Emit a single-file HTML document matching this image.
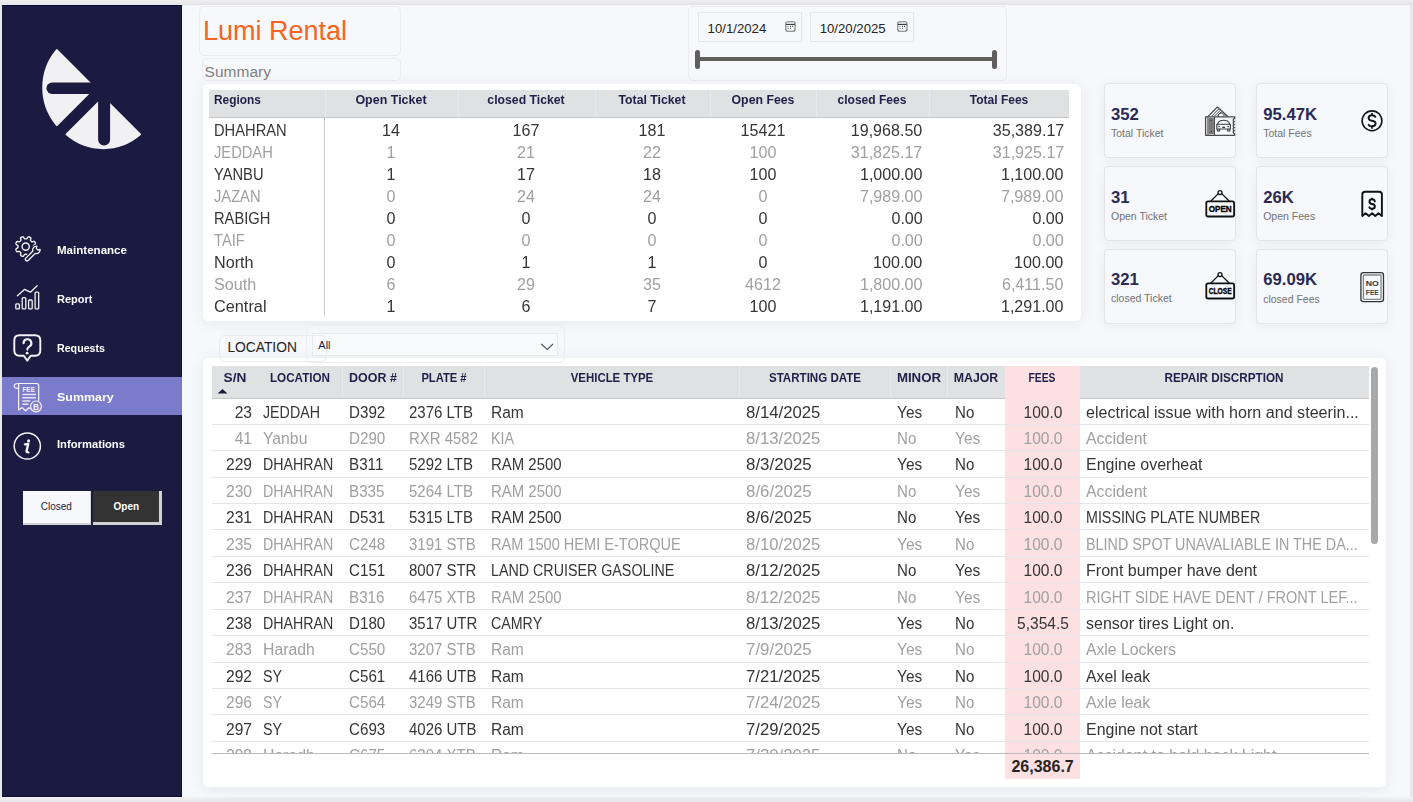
<!DOCTYPE html>
<html><head><meta charset="utf-8"><style>
html,body{margin:0;padding:0;}
body{width:1413px;height:802px;overflow:hidden;position:relative;background:#e9e9eb;font-family:"Liberation Sans", sans-serif;}
.t{position:absolute;line-height:1;white-space:pre;z-index:6;}
.b{position:absolute;}
svg{position:absolute;left:0;top:0;z-index:7;}
</style></head><body>
<div class="b" style="left:0.00px;top:0.00px;width:1413.00px;height:5.00px;background:linear-gradient(#f0f0f2,#e4e4e6)"></div>
<div class="b" style="left:0.00px;top:797.00px;width:1413.00px;height:5.00px;background:linear-gradient(#f3f3f5,#e5e5e7)"></div>
<div class="b" style="left:2.00px;top:5.00px;width:1408.00px;height:792.00px;background:#f7f8fc"></div>
<div class="b" style="left:2.00px;top:5.00px;width:180.00px;height:792.00px;background:#1b1a41;border-top:1px solid #0c0b33;border-bottom:1px solid #0c0b33;box-sizing:border-box"></div>
<div class="b" style="left:181.00px;top:5.00px;width:1.30px;height:792.00px;background:#131238"></div>
<div class="b" style="left:2.00px;top:377.00px;width:179.50px;height:37.50px;background:#7b7bcb"></div>
<div class="t" style="left:57.40px;top:245.25px;font-size:11.4px;color:#ffffff;font-weight:700;transform:scaleX(1.0138);transform-origin:left;">Maintenance</div>
<div class="t" style="left:57.40px;top:294.35px;font-size:11.4px;color:#ffffff;font-weight:700;transform:scaleX(0.9665);transform-origin:left;">Report</div>
<div class="t" style="left:57.40px;top:343.05px;font-size:11.4px;color:#ffffff;font-weight:700;transform:scaleX(0.9354);transform-origin:left;">Requests</div>
<div class="t" style="left:57.40px;top:391.75px;font-size:11.4px;color:#ffffff;font-weight:700;transform:scaleX(1.0913);transform-origin:left;">Summary</div>
<div class="t" style="left:57.40px;top:439.35px;font-size:11.4px;color:#ffffff;font-weight:700;transform:scaleX(0.9851);transform-origin:left;">Informations</div>
<div class="b" style="left:23.00px;top:491.00px;width:67.60px;height:33.70px;background:#f7f8fc;border-right:1.5px solid #d4d4d6;border-bottom:2.5px solid #d4d4d6;box-sizing:border-box"></div>
<div class="t" style="left:26.30px;width:60px;text-align:center;top:501.54px;font-size:10px;color:#1b1a41;font-weight:400;">Closed</div>
<div class="b" style="left:93.00px;top:491.00px;width:69.00px;height:34.00px;background:#333333;border-right:3px solid #d2d2d2;border-bottom:3px solid #d2d2d2;box-sizing:border-box"></div>
<div class="t" style="left:96.30px;width:60px;text-align:center;top:501.54px;font-size:10px;color:#ffffff;font-weight:700;">Open</div>
<div class="b" style="left:198.60px;top:5.80px;width:202.90px;height:49.90px;border:1px solid #ececee;border-radius:5px;box-sizing:border-box"></div>
<div class="t" style="left:203.00px;top:17.84px;font-size:27px;color:#f26522;font-weight:400;">Lumi Rental</div>
<div class="b" style="left:201.60px;top:58.20px;width:199.90px;height:23.30px;border:1px solid #ececee;border-radius:5px;box-sizing:border-box"></div>
<div class="t" style="left:204.60px;top:63.68px;font-size:15.5px;color:#808080;font-weight:400;">Summary</div>
<div class="b" style="left:687.50px;top:5.80px;width:319.00px;height:75.50px;border:1px solid #ececee;border-radius:5px;box-sizing:border-box"></div>
<div class="b" style="left:697.50px;top:12.10px;width:104.60px;height:29.90px;border:1px solid #e6e6e8;box-sizing:border-box"></div>
<div class="t" style="left:707.60px;top:22.23px;font-size:13.2px;color:#252423;font-weight:400;">10/1/2024</div>
<div class="b" style="left:809.60px;top:12.10px;width:104.60px;height:29.90px;border:1px solid #e6e6e8;box-sizing:border-box"></div>
<div class="t" style="left:819.70px;top:22.23px;font-size:13.2px;color:#252423;font-weight:400;">10/20/2025</div>
<div class="b" style="left:697.00px;top:57.30px;width:298.00px;height:3.70px;background:#605e5c"></div>
<div class="b" style="left:694.50px;top:50.20px;width:5.40px;height:18.70px;background:#605e5c;border-radius:3px"></div>
<div class="b" style="left:991.80px;top:50.20px;width:5.40px;height:18.70px;background:#605e5c;border-radius:3px"></div>
<div class="b" style="left:202.90px;top:83.60px;width:877.70px;height:237.70px;background:#ffffff;border-radius:5px;box-shadow:0 2px 16px rgba(0,0,0,0.07)"></div>
<div class="b" style="left:208.50px;top:89.50px;width:860.50px;height:28.50px;background:#dfe1e2;border-bottom:1.1px solid #c6c6c6;box-sizing:border-box"></div>
<div class="b" style="left:325.00px;top:89.50px;width:1.00px;height:27.40px;background:#e7e9ea"></div>
<div class="b" style="left:457.50px;top:89.50px;width:1.00px;height:27.40px;background:#e7e9ea"></div>
<div class="b" style="left:595.40px;top:89.50px;width:1.00px;height:27.40px;background:#e7e9ea"></div>
<div class="b" style="left:709.70px;top:89.50px;width:1.00px;height:27.40px;background:#e7e9ea"></div>
<div class="b" style="left:815.70px;top:89.50px;width:1.00px;height:27.40px;background:#e7e9ea"></div>
<div class="b" style="left:928.70px;top:89.50px;width:1.00px;height:27.40px;background:#e7e9ea"></div>
<div class="b" style="left:324.00px;top:118.00px;width:1.10px;height:197.80px;background:#c8c8c8"></div>
<div class="t" style="left:214.40px;top:94.16px;font-size:12.8px;color:#1f1f4a;font-weight:700;transform:scaleX(0.9309);transform-origin:left;">Regions</div>
<div class="t" style="left:311.05px;width:160px;text-align:center;top:94.16px;font-size:12.8px;color:#1f1f4a;font-weight:700;transform:scaleX(0.9747);transform-origin:center;">Open Ticket</div>
<div class="t" style="left:446.25px;width:160px;text-align:center;top:94.16px;font-size:12.8px;color:#1f1f4a;font-weight:700;transform:scaleX(0.9557);transform-origin:center;">closed Ticket</div>
<div class="t" style="left:572.35px;width:160px;text-align:center;top:94.16px;font-size:12.8px;color:#1f1f4a;font-weight:700;transform:scaleX(0.9576);transform-origin:center;">Total Ticket</div>
<div class="t" style="left:682.50px;width:160px;text-align:center;top:94.16px;font-size:12.8px;color:#1f1f4a;font-weight:700;transform:scaleX(0.9612);transform-origin:center;">Open Fees</div>
<div class="t" style="left:792.00px;width:160px;text-align:center;top:94.16px;font-size:12.8px;color:#1f1f4a;font-weight:700;transform:scaleX(0.9403);transform-origin:center;">closed Fees</div>
<div class="t" style="left:918.75px;width:160px;text-align:center;top:94.16px;font-size:12.8px;color:#1f1f4a;font-weight:700;transform:scaleX(0.9400);transform-origin:center;">Total Fees</div>
<div class="t" style="left:214.40px;top:122.73px;font-size:15.8px;color:#363636;font-weight:400;transform:scaleX(0.9300);transform-origin:left;">DHAHRAN</div>
<div class="t" style="left:331.05px;width:120px;text-align:center;top:122.73px;font-size:15.8px;color:#363636;font-weight:400;transform:scaleX(1.0200);transform-origin:center;">14</div>
<div class="t" style="left:466.25px;width:120px;text-align:center;top:122.73px;font-size:15.8px;color:#363636;font-weight:400;transform:scaleX(1.0200);transform-origin:center;">167</div>
<div class="t" style="left:592.35px;width:120px;text-align:center;top:122.73px;font-size:15.8px;color:#363636;font-weight:400;transform:scaleX(1.0200);transform-origin:center;">181</div>
<div class="t" style="left:702.50px;width:120px;text-align:center;top:122.73px;font-size:15.8px;color:#363636;font-weight:400;transform:scaleX(1.0200);transform-origin:center;">15421</div>
<div class="t" style="right:490.50px;top:122.73px;font-size:15.8px;color:#363636;font-weight:400;transform:scaleX(1.0175);transform-origin:right;">19,968.50</div>
<div class="t" style="right:349.20px;top:122.73px;font-size:15.8px;color:#363636;font-weight:400;transform:scaleX(1.0175);transform-origin:right;">35,389.17</div>
<div class="t" style="left:214.40px;top:144.73px;font-size:15.8px;color:#a0a0a0;font-weight:400;transform:scaleX(0.9300);transform-origin:left;">JEDDAH</div>
<div class="t" style="left:331.05px;width:120px;text-align:center;top:144.73px;font-size:15.8px;color:#a0a0a0;font-weight:400;transform:scaleX(1.0200);transform-origin:center;">1</div>
<div class="t" style="left:466.25px;width:120px;text-align:center;top:144.73px;font-size:15.8px;color:#a0a0a0;font-weight:400;transform:scaleX(1.0200);transform-origin:center;">21</div>
<div class="t" style="left:592.35px;width:120px;text-align:center;top:144.73px;font-size:15.8px;color:#a0a0a0;font-weight:400;transform:scaleX(1.0200);transform-origin:center;">22</div>
<div class="t" style="left:702.50px;width:120px;text-align:center;top:144.73px;font-size:15.8px;color:#a0a0a0;font-weight:400;transform:scaleX(1.0200);transform-origin:center;">100</div>
<div class="t" style="right:490.50px;top:144.73px;font-size:15.8px;color:#a0a0a0;font-weight:400;transform:scaleX(1.0175);transform-origin:right;">31,825.17</div>
<div class="t" style="right:349.20px;top:144.73px;font-size:15.8px;color:#a0a0a0;font-weight:400;transform:scaleX(1.0175);transform-origin:right;">31,925.17</div>
<div class="t" style="left:214.40px;top:166.73px;font-size:15.8px;color:#363636;font-weight:400;transform:scaleX(0.9300);transform-origin:left;">YANBU</div>
<div class="t" style="left:331.05px;width:120px;text-align:center;top:166.73px;font-size:15.8px;color:#363636;font-weight:400;transform:scaleX(1.0200);transform-origin:center;">1</div>
<div class="t" style="left:466.25px;width:120px;text-align:center;top:166.73px;font-size:15.8px;color:#363636;font-weight:400;transform:scaleX(1.0200);transform-origin:center;">17</div>
<div class="t" style="left:592.35px;width:120px;text-align:center;top:166.73px;font-size:15.8px;color:#363636;font-weight:400;transform:scaleX(1.0200);transform-origin:center;">18</div>
<div class="t" style="left:702.50px;width:120px;text-align:center;top:166.73px;font-size:15.8px;color:#363636;font-weight:400;transform:scaleX(1.0200);transform-origin:center;">100</div>
<div class="t" style="right:490.50px;top:166.73px;font-size:15.8px;color:#363636;font-weight:400;transform:scaleX(1.0171);transform-origin:right;">1,000.00</div>
<div class="t" style="right:349.20px;top:166.73px;font-size:15.8px;color:#363636;font-weight:400;transform:scaleX(1.0171);transform-origin:right;">1,100.00</div>
<div class="t" style="left:214.40px;top:188.73px;font-size:15.8px;color:#a0a0a0;font-weight:400;transform:scaleX(0.9300);transform-origin:left;">JAZAN</div>
<div class="t" style="left:331.05px;width:120px;text-align:center;top:188.73px;font-size:15.8px;color:#a0a0a0;font-weight:400;transform:scaleX(1.0200);transform-origin:center;">0</div>
<div class="t" style="left:466.25px;width:120px;text-align:center;top:188.73px;font-size:15.8px;color:#a0a0a0;font-weight:400;transform:scaleX(1.0200);transform-origin:center;">24</div>
<div class="t" style="left:592.35px;width:120px;text-align:center;top:188.73px;font-size:15.8px;color:#a0a0a0;font-weight:400;transform:scaleX(1.0200);transform-origin:center;">24</div>
<div class="t" style="left:702.50px;width:120px;text-align:center;top:188.73px;font-size:15.8px;color:#a0a0a0;font-weight:400;transform:scaleX(1.0200);transform-origin:center;">0</div>
<div class="t" style="right:490.50px;top:188.73px;font-size:15.8px;color:#a0a0a0;font-weight:400;transform:scaleX(1.0171);transform-origin:right;">7,989.00</div>
<div class="t" style="right:349.20px;top:188.73px;font-size:15.8px;color:#a0a0a0;font-weight:400;transform:scaleX(1.0171);transform-origin:right;">7,989.00</div>
<div class="t" style="left:214.40px;top:210.73px;font-size:15.8px;color:#363636;font-weight:400;transform:scaleX(0.9300);transform-origin:left;">RABIGH</div>
<div class="t" style="left:331.05px;width:120px;text-align:center;top:210.73px;font-size:15.8px;color:#363636;font-weight:400;transform:scaleX(1.0200);transform-origin:center;">0</div>
<div class="t" style="left:466.25px;width:120px;text-align:center;top:210.73px;font-size:15.8px;color:#363636;font-weight:400;transform:scaleX(1.0200);transform-origin:center;">0</div>
<div class="t" style="left:592.35px;width:120px;text-align:center;top:210.73px;font-size:15.8px;color:#363636;font-weight:400;transform:scaleX(1.0200);transform-origin:center;">0</div>
<div class="t" style="left:702.50px;width:120px;text-align:center;top:210.73px;font-size:15.8px;color:#363636;font-weight:400;transform:scaleX(1.0200);transform-origin:center;">0</div>
<div class="t" style="right:490.50px;top:210.73px;font-size:15.8px;color:#363636;font-weight:400;transform:scaleX(1.0171);transform-origin:right;">0.00</div>
<div class="t" style="right:349.20px;top:210.73px;font-size:15.8px;color:#363636;font-weight:400;transform:scaleX(1.0171);transform-origin:right;">0.00</div>
<div class="t" style="left:214.40px;top:232.73px;font-size:15.8px;color:#a0a0a0;font-weight:400;transform:scaleX(0.9300);transform-origin:left;">TAIF</div>
<div class="t" style="left:331.05px;width:120px;text-align:center;top:232.73px;font-size:15.8px;color:#a0a0a0;font-weight:400;transform:scaleX(1.0200);transform-origin:center;">0</div>
<div class="t" style="left:466.25px;width:120px;text-align:center;top:232.73px;font-size:15.8px;color:#a0a0a0;font-weight:400;transform:scaleX(1.0200);transform-origin:center;">0</div>
<div class="t" style="left:592.35px;width:120px;text-align:center;top:232.73px;font-size:15.8px;color:#a0a0a0;font-weight:400;transform:scaleX(1.0200);transform-origin:center;">0</div>
<div class="t" style="left:702.50px;width:120px;text-align:center;top:232.73px;font-size:15.8px;color:#a0a0a0;font-weight:400;transform:scaleX(1.0200);transform-origin:center;">0</div>
<div class="t" style="right:490.50px;top:232.73px;font-size:15.8px;color:#a0a0a0;font-weight:400;transform:scaleX(1.0171);transform-origin:right;">0.00</div>
<div class="t" style="right:349.20px;top:232.73px;font-size:15.8px;color:#a0a0a0;font-weight:400;transform:scaleX(1.0171);transform-origin:right;">0.00</div>
<div class="t" style="left:214.40px;top:254.73px;font-size:15.8px;color:#363636;font-weight:400;transform:scaleX(1.0216);transform-origin:left;">North</div>
<div class="t" style="left:331.05px;width:120px;text-align:center;top:254.73px;font-size:15.8px;color:#363636;font-weight:400;transform:scaleX(1.0200);transform-origin:center;">0</div>
<div class="t" style="left:466.25px;width:120px;text-align:center;top:254.73px;font-size:15.8px;color:#363636;font-weight:400;transform:scaleX(1.0200);transform-origin:center;">1</div>
<div class="t" style="left:592.35px;width:120px;text-align:center;top:254.73px;font-size:15.8px;color:#363636;font-weight:400;transform:scaleX(1.0200);transform-origin:center;">1</div>
<div class="t" style="left:702.50px;width:120px;text-align:center;top:254.73px;font-size:15.8px;color:#363636;font-weight:400;transform:scaleX(1.0200);transform-origin:center;">0</div>
<div class="t" style="right:490.50px;top:254.73px;font-size:15.8px;color:#363636;font-weight:400;transform:scaleX(1.0182);transform-origin:right;">100.00</div>
<div class="t" style="right:349.20px;top:254.73px;font-size:15.8px;color:#363636;font-weight:400;transform:scaleX(1.0182);transform-origin:right;">100.00</div>
<div class="t" style="left:214.40px;top:276.73px;font-size:15.8px;color:#a0a0a0;font-weight:400;transform:scaleX(1.0268);transform-origin:left;">South</div>
<div class="t" style="left:331.05px;width:120px;text-align:center;top:276.73px;font-size:15.8px;color:#a0a0a0;font-weight:400;transform:scaleX(1.0200);transform-origin:center;">6</div>
<div class="t" style="left:466.25px;width:120px;text-align:center;top:276.73px;font-size:15.8px;color:#a0a0a0;font-weight:400;transform:scaleX(1.0200);transform-origin:center;">29</div>
<div class="t" style="left:592.35px;width:120px;text-align:center;top:276.73px;font-size:15.8px;color:#a0a0a0;font-weight:400;transform:scaleX(1.0200);transform-origin:center;">35</div>
<div class="t" style="left:702.50px;width:120px;text-align:center;top:276.73px;font-size:15.8px;color:#a0a0a0;font-weight:400;transform:scaleX(1.0200);transform-origin:center;">4612</div>
<div class="t" style="right:490.50px;top:276.73px;font-size:15.8px;color:#a0a0a0;font-weight:400;transform:scaleX(1.0171);transform-origin:right;">1,800.00</div>
<div class="t" style="right:349.20px;top:276.73px;font-size:15.8px;color:#a0a0a0;font-weight:400;transform:scaleX(1.0171);transform-origin:right;">6,411.50</div>
<div class="t" style="left:214.40px;top:298.73px;font-size:15.8px;color:#363636;font-weight:400;transform:scaleX(1.0309);transform-origin:left;">Central</div>
<div class="t" style="left:331.05px;width:120px;text-align:center;top:298.73px;font-size:15.8px;color:#363636;font-weight:400;transform:scaleX(1.0200);transform-origin:center;">1</div>
<div class="t" style="left:466.25px;width:120px;text-align:center;top:298.73px;font-size:15.8px;color:#363636;font-weight:400;transform:scaleX(1.0200);transform-origin:center;">6</div>
<div class="t" style="left:592.35px;width:120px;text-align:center;top:298.73px;font-size:15.8px;color:#363636;font-weight:400;transform:scaleX(1.0200);transform-origin:center;">7</div>
<div class="t" style="left:702.50px;width:120px;text-align:center;top:298.73px;font-size:15.8px;color:#363636;font-weight:400;transform:scaleX(1.0200);transform-origin:center;">100</div>
<div class="t" style="right:490.50px;top:298.73px;font-size:15.8px;color:#363636;font-weight:400;transform:scaleX(1.0171);transform-origin:right;">1,191.00</div>
<div class="t" style="right:349.20px;top:298.73px;font-size:15.8px;color:#363636;font-weight:400;transform:scaleX(1.0171);transform-origin:right;">1,291.00</div>
<div class="b" style="left:1104.20px;top:83.30px;width:131.40px;height:75.00px;background:#f7f8fc;border:1px solid #e4e4e6;border-radius:4px;box-sizing:border-box;box-shadow:0 2px 12px rgba(0,0,0,0.06)"></div>
<div class="t" style="left:1111.00px;top:106.56px;font-size:16.7px;color:#2a2a55;font-weight:700;">352</div>
<div class="t" style="left:1111.00px;top:127.71px;font-size:10.5px;color:#727272;font-weight:400;">Total Ticket</div>
<div class="b" style="left:1256.40px;top:83.30px;width:131.90px;height:75.00px;background:#f7f8fc;border:1px solid #e4e4e6;border-radius:4px;box-sizing:border-box;box-shadow:0 2px 12px rgba(0,0,0,0.06)"></div>
<div class="t" style="left:1263.20px;top:106.56px;font-size:16.7px;color:#2a2a55;font-weight:700;">95.47K</div>
<div class="t" style="left:1263.20px;top:127.71px;font-size:10.5px;color:#727272;font-weight:400;">Total Fees</div>
<div class="b" style="left:1104.20px;top:166.40px;width:131.40px;height:75.00px;background:#f7f8fc;border:1px solid #e4e4e6;border-radius:4px;box-sizing:border-box;box-shadow:0 2px 12px rgba(0,0,0,0.06)"></div>
<div class="t" style="left:1111.00px;top:189.66px;font-size:16.7px;color:#2a2a55;font-weight:700;">31</div>
<div class="t" style="left:1111.00px;top:210.81px;font-size:10.5px;color:#727272;font-weight:400;">Open Ticket</div>
<div class="b" style="left:1256.40px;top:166.40px;width:131.90px;height:75.00px;background:#f7f8fc;border:1px solid #e4e4e6;border-radius:4px;box-sizing:border-box;box-shadow:0 2px 12px rgba(0,0,0,0.06)"></div>
<div class="t" style="left:1263.20px;top:189.66px;font-size:16.7px;color:#2a2a55;font-weight:700;">26K</div>
<div class="t" style="left:1263.20px;top:210.81px;font-size:10.5px;color:#727272;font-weight:400;">Open Fees</div>
<div class="b" style="left:1104.20px;top:248.60px;width:131.40px;height:75.00px;background:#f7f8fc;border:1px solid #e4e4e6;border-radius:4px;box-sizing:border-box;box-shadow:0 2px 12px rgba(0,0,0,0.06)"></div>
<div class="t" style="left:1111.00px;top:271.86px;font-size:16.7px;color:#2a2a55;font-weight:700;">321</div>
<div class="t" style="left:1111.00px;top:293.01px;font-size:10.5px;color:#727272;font-weight:400;">closed Ticket</div>
<div class="b" style="left:1256.40px;top:249.10px;width:131.90px;height:75.10px;background:#f7f8fc;border:1px solid #e4e4e6;border-radius:4px;box-sizing:border-box;box-shadow:0 2px 12px rgba(0,0,0,0.06)"></div>
<div class="t" style="left:1263.20px;top:272.36px;font-size:16.7px;color:#2a2a55;font-weight:700;">69.09K</div>
<div class="t" style="left:1263.20px;top:293.51px;font-size:10.5px;color:#727272;font-weight:400;">closed Fees</div>
<div class="b" style="left:218.50px;top:334.50px;width:108.90px;height:27.70px;border:1px solid #e9eaec;border-radius:6px;box-sizing:border-box;z-index:5"></div>
<div class="b" style="left:305.90px;top:325.40px;width:259.10px;height:37.40px;border:1px solid #ecedef;border-radius:6px;box-sizing:border-box;z-index:5"></div>
<div class="b" style="left:312.10px;top:332.80px;width:246.40px;height:23.40px;background:#f9fafc;border:1px solid #e9e9eb;box-sizing:border-box;z-index:4"></div>
<div class="t" style="left:227.40px;top:340.62px;font-size:13.8px;color:#252423;font-weight:400;">LOCATION</div>
<div class="t" style="left:318.30px;top:340.29px;font-size:11px;color:#1f1f4a;font-weight:400;">All</div>
<div class="b" style="left:202.70px;top:358.30px;width:1183.60px;height:428.50px;background:#ffffff;border-radius:5px;box-shadow:0 2px 16px rgba(0,0,0,0.07)"></div>
<div class="b" style="left:212.10px;top:366.00px;width:1156.90px;height:32.80px;background:#dfe1e2;border-bottom:1.5px solid #c9c9c9;box-sizing:border-box"></div>
<div class="b" style="left:1005.00px;top:366.00px;width:74.50px;height:413.00px;background:#fde0e2"></div>
<div class="b" style="left:342.00px;top:366.00px;width:1.00px;height:31.00px;background:#e8eaeb"></div>
<div class="b" style="left:403.10px;top:366.00px;width:1.00px;height:31.00px;background:#e8eaeb"></div>
<div class="b" style="left:484.10px;top:366.00px;width:1.00px;height:31.00px;background:#e8eaeb"></div>
<div class="b" style="left:739.00px;top:366.00px;width:1.00px;height:31.00px;background:#e8eaeb"></div>
<div class="b" style="left:889.90px;top:366.00px;width:1.00px;height:31.00px;background:#e8eaeb"></div>
<div class="b" style="left:946.50px;top:366.00px;width:1.00px;height:31.00px;background:#e8eaeb"></div>
<div class="t" style="left:134.70px;width:200px;text-align:center;top:370.90px;font-size:13px;color:#1f1f4a;font-weight:700;transform:scaleX(1.0521);transform-origin:center;">S/N</div>
<div class="t" style="left:199.90px;width:200px;text-align:center;top:370.90px;font-size:13px;color:#1f1f4a;font-weight:700;transform:scaleX(0.8986);transform-origin:center;">LOCATION</div>
<div class="t" style="left:273.05px;width:200px;text-align:center;top:370.90px;font-size:13px;color:#1f1f4a;font-weight:700;transform:scaleX(0.9591);transform-origin:center;">DOOR #</div>
<div class="t" style="left:344.10px;width:200px;text-align:center;top:370.90px;font-size:13px;color:#1f1f4a;font-weight:700;transform:scaleX(0.8606);transform-origin:center;">PLATE #</div>
<div class="t" style="left:512.05px;width:200px;text-align:center;top:370.90px;font-size:13px;color:#1f1f4a;font-weight:700;transform:scaleX(0.8785);transform-origin:center;">VEHICLE TYPE</div>
<div class="t" style="left:714.95px;width:200px;text-align:center;top:370.90px;font-size:13px;color:#1f1f4a;font-weight:700;transform:scaleX(0.8896);transform-origin:center;">STARTING DATE</div>
<div class="t" style="left:818.70px;width:200px;text-align:center;top:370.90px;font-size:13px;color:#1f1f4a;font-weight:700;transform:scaleX(1.0201);transform-origin:center;">MINOR</div>
<div class="t" style="left:876.00px;width:200px;text-align:center;top:370.90px;font-size:13px;color:#1f1f4a;font-weight:700;transform:scaleX(0.9479);transform-origin:center;">MAJOR</div>
<div class="t" style="left:942.25px;width:200px;text-align:center;top:370.90px;font-size:13px;color:#1f1f4a;font-weight:700;transform:scaleX(0.7952);transform-origin:center;">FEES</div>
<div class="t" style="left:1124.25px;width:200px;text-align:center;top:370.90px;font-size:13px;color:#1f1f4a;font-weight:700;transform:scaleX(0.9014);transform-origin:center;">REPAIR DISCRPTION</div>
<div class="b" style="left:212px;top:398px;width:1157px;height:355px;overflow:hidden">
<div class="t" style="left:-60.40px;width:100px;text-align:right;top:6.63px;font-size:15.8px;color:#363636;transform:scaleX(0.9877);transform-origin:right;">23</div>
<div class="t" style="left:50.90px;top:6.63px;font-size:15.8px;color:#363636;transform:scaleX(0.9006);transform-origin:left;">JEDDAH</div>
<div class="t" style="left:136.70px;top:6.63px;font-size:15.8px;color:#363636;transform:scaleX(0.9614);transform-origin:left;">D392</div>
<div class="t" style="left:197.40px;top:6.63px;font-size:15.8px;color:#363636;transform:scaleX(0.9496);transform-origin:left;">2376 LTB</div>
<div class="t" style="left:279.00px;top:6.63px;font-size:15.8px;color:#363636;transform:scaleX(0.9834);transform-origin:left;">Ram</div>
<div class="t" style="left:534.00px;top:6.63px;font-size:15.8px;color:#363636;transform:scaleX(1.0579);transform-origin:left;">8/14/2025</div>
<div class="t" style="left:684.80px;top:6.63px;font-size:15.8px;color:#363636;transform:scaleX(0.9777);transform-origin:left;">Yes</div>
<div class="t" style="left:742.50px;top:6.63px;font-size:15.8px;color:#363636;transform:scaleX(0.9553);transform-origin:left;">No</div>
<div class="t" style="left:793.50px;width:74px;text-align:center;top:6.63px;font-size:15.8px;color:#363636;transform:scaleX(0.9856);transform-origin:center;">100.0</div>
<div class="t" style="left:873.90px;top:6.63px;font-size:15.8px;color:#363636;transform:scaleX(1.0188);transform-origin:left;">electrical issue with horn and steerin...</div>
<div class="b" style="left:0;top:25.80px;width:1157px;height:1px;background:#e3e6e8"></div>
<div class="t" style="left:-60.40px;width:100px;text-align:right;top:33.05px;font-size:15.8px;color:#a0a0a0;transform:scaleX(0.9877);transform-origin:right;">41</div>
<div class="t" style="left:50.90px;top:33.05px;font-size:15.8px;color:#a0a0a0;transform:scaleX(0.9974);transform-origin:left;">Yanbu</div>
<div class="t" style="left:136.70px;top:33.05px;font-size:15.8px;color:#a0a0a0;transform:scaleX(0.9614);transform-origin:left;">D290</div>
<div class="t" style="left:197.40px;top:33.05px;font-size:15.8px;color:#a0a0a0;transform:scaleX(0.9467);transform-origin:left;">RXR 4582</div>
<div class="t" style="left:279.00px;top:33.05px;font-size:15.8px;color:#a0a0a0;transform:scaleX(0.9006);transform-origin:left;">KIA</div>
<div class="t" style="left:534.00px;top:33.05px;font-size:15.8px;color:#a0a0a0;transform:scaleX(1.0579);transform-origin:left;">8/13/2025</div>
<div class="t" style="left:684.80px;top:33.05px;font-size:15.8px;color:#a0a0a0;transform:scaleX(0.9553);transform-origin:left;">No</div>
<div class="t" style="left:742.50px;top:33.05px;font-size:15.8px;color:#a0a0a0;transform:scaleX(0.9777);transform-origin:left;">Yes</div>
<div class="t" style="left:793.50px;width:74px;text-align:center;top:33.05px;font-size:15.8px;color:#a0a0a0;transform:scaleX(0.9856);transform-origin:center;">100.0</div>
<div class="t" style="left:873.90px;top:33.05px;font-size:15.8px;color:#a0a0a0;transform:scaleX(1.0046);transform-origin:left;">Accident</div>
<div class="b" style="left:0;top:52.22px;width:1157px;height:1px;background:#e3e6e8"></div>
<div class="t" style="left:-60.40px;width:100px;text-align:right;top:59.47px;font-size:15.8px;color:#363636;transform:scaleX(0.9877);transform-origin:right;">229</div>
<div class="t" style="left:50.90px;top:59.47px;font-size:15.8px;color:#363636;transform:scaleX(0.9006);transform-origin:left;">DHAHRAN</div>
<div class="t" style="left:136.70px;top:59.47px;font-size:15.8px;color:#363636;transform:scaleX(0.9628);transform-origin:left;">B311</div>
<div class="t" style="left:197.40px;top:59.47px;font-size:15.8px;color:#363636;transform:scaleX(0.9496);transform-origin:left;">5292 LTB</div>
<div class="t" style="left:279.00px;top:59.47px;font-size:15.8px;color:#363636;transform:scaleX(0.9456);transform-origin:left;">RAM 2500</div>
<div class="t" style="left:534.00px;top:59.47px;font-size:15.8px;color:#363636;transform:scaleX(1.0679);transform-origin:left;">8/3/2025</div>
<div class="t" style="left:684.80px;top:59.47px;font-size:15.8px;color:#363636;transform:scaleX(0.9777);transform-origin:left;">Yes</div>
<div class="t" style="left:742.50px;top:59.47px;font-size:15.8px;color:#363636;transform:scaleX(0.9553);transform-origin:left;">No</div>
<div class="t" style="left:793.50px;width:74px;text-align:center;top:59.47px;font-size:15.8px;color:#363636;transform:scaleX(0.9856);transform-origin:center;">100.0</div>
<div class="t" style="left:873.90px;top:59.47px;font-size:15.8px;color:#363636;transform:scaleX(1.0127);transform-origin:left;">Engine overheat</div>
<div class="b" style="left:0;top:78.64px;width:1157px;height:1px;background:#e3e6e8"></div>
<div class="t" style="left:-60.40px;width:100px;text-align:right;top:85.89px;font-size:15.8px;color:#a0a0a0;transform:scaleX(0.9877);transform-origin:right;">230</div>
<div class="t" style="left:50.90px;top:85.89px;font-size:15.8px;color:#a0a0a0;transform:scaleX(0.9006);transform-origin:left;">DHAHRAN</div>
<div class="t" style="left:136.70px;top:85.89px;font-size:15.8px;color:#a0a0a0;transform:scaleX(0.9628);transform-origin:left;">B335</div>
<div class="t" style="left:197.40px;top:85.89px;font-size:15.8px;color:#a0a0a0;transform:scaleX(0.9496);transform-origin:left;">5264 LTB</div>
<div class="t" style="left:279.00px;top:85.89px;font-size:15.8px;color:#a0a0a0;transform:scaleX(0.9456);transform-origin:left;">RAM 2500</div>
<div class="t" style="left:534.00px;top:85.89px;font-size:15.8px;color:#a0a0a0;transform:scaleX(1.0679);transform-origin:left;">8/6/2025</div>
<div class="t" style="left:684.80px;top:85.89px;font-size:15.8px;color:#a0a0a0;transform:scaleX(0.9553);transform-origin:left;">No</div>
<div class="t" style="left:742.50px;top:85.89px;font-size:15.8px;color:#a0a0a0;transform:scaleX(0.9777);transform-origin:left;">Yes</div>
<div class="t" style="left:793.50px;width:74px;text-align:center;top:85.89px;font-size:15.8px;color:#a0a0a0;transform:scaleX(0.9856);transform-origin:center;">100.0</div>
<div class="t" style="left:873.90px;top:85.89px;font-size:15.8px;color:#a0a0a0;transform:scaleX(1.0046);transform-origin:left;">Accident</div>
<div class="b" style="left:0;top:105.06px;width:1157px;height:1px;background:#e3e6e8"></div>
<div class="t" style="left:-60.40px;width:100px;text-align:right;top:112.31px;font-size:15.8px;color:#363636;transform:scaleX(0.9877);transform-origin:right;">231</div>
<div class="t" style="left:50.90px;top:112.31px;font-size:15.8px;color:#363636;transform:scaleX(0.9006);transform-origin:left;">DHAHRAN</div>
<div class="t" style="left:136.70px;top:112.31px;font-size:15.8px;color:#363636;transform:scaleX(0.9614);transform-origin:left;">D531</div>
<div class="t" style="left:197.40px;top:112.31px;font-size:15.8px;color:#363636;transform:scaleX(0.9496);transform-origin:left;">5315 LTB</div>
<div class="t" style="left:279.00px;top:112.31px;font-size:15.8px;color:#363636;transform:scaleX(0.9456);transform-origin:left;">RAM 2500</div>
<div class="t" style="left:534.00px;top:112.31px;font-size:15.8px;color:#363636;transform:scaleX(1.0679);transform-origin:left;">8/6/2025</div>
<div class="t" style="left:684.80px;top:112.31px;font-size:15.8px;color:#363636;transform:scaleX(0.9553);transform-origin:left;">No</div>
<div class="t" style="left:742.50px;top:112.31px;font-size:15.8px;color:#363636;transform:scaleX(0.9777);transform-origin:left;">Yes</div>
<div class="t" style="left:793.50px;width:74px;text-align:center;top:112.31px;font-size:15.8px;color:#363636;transform:scaleX(0.9856);transform-origin:center;">100.0</div>
<div class="t" style="left:873.90px;top:112.31px;font-size:15.8px;color:#363636;transform:scaleX(0.9036);transform-origin:left;">MISSING PLATE NUMBER</div>
<div class="b" style="left:0;top:131.48px;width:1157px;height:1px;background:#e3e6e8"></div>
<div class="t" style="left:-60.40px;width:100px;text-align:right;top:138.73px;font-size:15.8px;color:#a0a0a0;transform:scaleX(0.9877);transform-origin:right;">235</div>
<div class="t" style="left:50.90px;top:138.73px;font-size:15.8px;color:#a0a0a0;transform:scaleX(0.9006);transform-origin:left;">DHAHRAN</div>
<div class="t" style="left:136.70px;top:138.73px;font-size:15.8px;color:#a0a0a0;transform:scaleX(0.9614);transform-origin:left;">C248</div>
<div class="t" style="left:197.40px;top:138.73px;font-size:15.8px;color:#a0a0a0;transform:scaleX(0.9484);transform-origin:left;">3191 STB</div>
<div class="t" style="left:279.00px;top:138.73px;font-size:15.8px;color:#a0a0a0;transform:scaleX(0.9215);transform-origin:left;">RAM 1500 HEMI E-TORQUE</div>
<div class="t" style="left:534.00px;top:138.73px;font-size:15.8px;color:#a0a0a0;transform:scaleX(1.0579);transform-origin:left;">8/10/2025</div>
<div class="t" style="left:684.80px;top:138.73px;font-size:15.8px;color:#a0a0a0;transform:scaleX(0.9777);transform-origin:left;">Yes</div>
<div class="t" style="left:742.50px;top:138.73px;font-size:15.8px;color:#a0a0a0;transform:scaleX(0.9553);transform-origin:left;">No</div>
<div class="t" style="left:793.50px;width:74px;text-align:center;top:138.73px;font-size:15.8px;color:#a0a0a0;transform:scaleX(0.9856);transform-origin:center;">100.0</div>
<div class="t" style="left:873.90px;top:138.73px;font-size:15.8px;color:#a0a0a0;transform:scaleX(0.9085);transform-origin:left;">BLIND SPOT UNAVALIABLE IN THE DA...</div>
<div class="b" style="left:0;top:157.90px;width:1157px;height:1px;background:#e3e6e8"></div>
<div class="t" style="left:-60.40px;width:100px;text-align:right;top:165.15px;font-size:15.8px;color:#363636;transform:scaleX(0.9877);transform-origin:right;">236</div>
<div class="t" style="left:50.90px;top:165.15px;font-size:15.8px;color:#363636;transform:scaleX(0.9006);transform-origin:left;">DHAHRAN</div>
<div class="t" style="left:136.70px;top:165.15px;font-size:15.8px;color:#363636;transform:scaleX(0.9614);transform-origin:left;">C151</div>
<div class="t" style="left:197.40px;top:165.15px;font-size:15.8px;color:#363636;transform:scaleX(0.9478);transform-origin:left;">8007 STR</div>
<div class="t" style="left:279.00px;top:165.15px;font-size:15.8px;color:#363636;transform:scaleX(0.9035);transform-origin:left;">LAND CRUISER GASOLINE</div>
<div class="t" style="left:534.00px;top:165.15px;font-size:15.8px;color:#363636;transform:scaleX(1.0579);transform-origin:left;">8/12/2025</div>
<div class="t" style="left:684.80px;top:165.15px;font-size:15.8px;color:#363636;transform:scaleX(0.9553);transform-origin:left;">No</div>
<div class="t" style="left:742.50px;top:165.15px;font-size:15.8px;color:#363636;transform:scaleX(0.9777);transform-origin:left;">Yes</div>
<div class="t" style="left:793.50px;width:74px;text-align:center;top:165.15px;font-size:15.8px;color:#363636;transform:scaleX(0.9856);transform-origin:center;">100.0</div>
<div class="t" style="left:873.90px;top:165.15px;font-size:15.8px;color:#363636;transform:scaleX(1.0147);transform-origin:left;">Front bumper have dent</div>
<div class="b" style="left:0;top:184.32px;width:1157px;height:1px;background:#e3e6e8"></div>
<div class="t" style="left:-60.40px;width:100px;text-align:right;top:191.57px;font-size:15.8px;color:#a0a0a0;transform:scaleX(0.9877);transform-origin:right;">237</div>
<div class="t" style="left:50.90px;top:191.57px;font-size:15.8px;color:#a0a0a0;transform:scaleX(0.9006);transform-origin:left;">DHAHRAN</div>
<div class="t" style="left:136.70px;top:191.57px;font-size:15.8px;color:#a0a0a0;transform:scaleX(0.9628);transform-origin:left;">B316</div>
<div class="t" style="left:197.40px;top:191.57px;font-size:15.8px;color:#a0a0a0;transform:scaleX(0.9484);transform-origin:left;">6475 XTB</div>
<div class="t" style="left:279.00px;top:191.57px;font-size:15.8px;color:#a0a0a0;transform:scaleX(0.9456);transform-origin:left;">RAM 2500</div>
<div class="t" style="left:534.00px;top:191.57px;font-size:15.8px;color:#a0a0a0;transform:scaleX(1.0579);transform-origin:left;">8/12/2025</div>
<div class="t" style="left:684.80px;top:191.57px;font-size:15.8px;color:#a0a0a0;transform:scaleX(0.9553);transform-origin:left;">No</div>
<div class="t" style="left:742.50px;top:191.57px;font-size:15.8px;color:#a0a0a0;transform:scaleX(0.9777);transform-origin:left;">Yes</div>
<div class="t" style="left:793.50px;width:74px;text-align:center;top:191.57px;font-size:15.8px;color:#a0a0a0;transform:scaleX(0.9856);transform-origin:center;">100.0</div>
<div class="t" style="left:873.90px;top:191.57px;font-size:15.8px;color:#a0a0a0;transform:scaleX(0.9190);transform-origin:left;">RIGHT SIDE HAVE DENT / FRONT LEF...</div>
<div class="b" style="left:0;top:210.74px;width:1157px;height:1px;background:#e3e6e8"></div>
<div class="t" style="left:-60.40px;width:100px;text-align:right;top:217.99px;font-size:15.8px;color:#363636;transform:scaleX(0.9877);transform-origin:right;">238</div>
<div class="t" style="left:50.90px;top:217.99px;font-size:15.8px;color:#363636;transform:scaleX(0.9006);transform-origin:left;">DHAHRAN</div>
<div class="t" style="left:136.70px;top:217.99px;font-size:15.8px;color:#363636;transform:scaleX(0.9614);transform-origin:left;">D180</div>
<div class="t" style="left:197.40px;top:217.99px;font-size:15.8px;color:#363636;transform:scaleX(0.9472);transform-origin:left;">3517 UTR</div>
<div class="t" style="left:279.00px;top:217.99px;font-size:15.8px;color:#363636;transform:scaleX(0.9006);transform-origin:left;">CAMRY</div>
<div class="t" style="left:534.00px;top:217.99px;font-size:15.8px;color:#363636;transform:scaleX(1.0579);transform-origin:left;">8/13/2025</div>
<div class="t" style="left:684.80px;top:217.99px;font-size:15.8px;color:#363636;transform:scaleX(0.9777);transform-origin:left;">Yes</div>
<div class="t" style="left:742.50px;top:217.99px;font-size:15.8px;color:#363636;transform:scaleX(0.9553);transform-origin:left;">No</div>
<div class="t" style="left:793.50px;width:74px;text-align:center;top:217.99px;font-size:15.8px;color:#363636;transform:scaleX(0.9845);transform-origin:center;">5,354.5</div>
<div class="t" style="left:873.90px;top:217.99px;font-size:15.8px;color:#363636;transform:scaleX(1.0120);transform-origin:left;">sensor tires Light on.</div>
<div class="b" style="left:0;top:237.16px;width:1157px;height:1px;background:#e3e6e8"></div>
<div class="t" style="left:-60.40px;width:100px;text-align:right;top:244.41px;font-size:15.8px;color:#a0a0a0;transform:scaleX(0.9877);transform-origin:right;">283</div>
<div class="t" style="left:50.90px;top:244.41px;font-size:15.8px;color:#a0a0a0;transform:scaleX(0.9987);transform-origin:left;">Haradh</div>
<div class="t" style="left:136.70px;top:244.41px;font-size:15.8px;color:#a0a0a0;transform:scaleX(0.9614);transform-origin:left;">C550</div>
<div class="t" style="left:197.40px;top:244.41px;font-size:15.8px;color:#a0a0a0;transform:scaleX(0.9484);transform-origin:left;">3207 STB</div>
<div class="t" style="left:279.00px;top:244.41px;font-size:15.8px;color:#a0a0a0;transform:scaleX(0.9834);transform-origin:left;">Ram</div>
<div class="t" style="left:534.00px;top:244.41px;font-size:15.8px;color:#a0a0a0;transform:scaleX(1.0679);transform-origin:left;">7/9/2025</div>
<div class="t" style="left:684.80px;top:244.41px;font-size:15.8px;color:#a0a0a0;transform:scaleX(0.9777);transform-origin:left;">Yes</div>
<div class="t" style="left:742.50px;top:244.41px;font-size:15.8px;color:#a0a0a0;transform:scaleX(0.9553);transform-origin:left;">No</div>
<div class="t" style="left:793.50px;width:74px;text-align:center;top:244.41px;font-size:15.8px;color:#a0a0a0;transform:scaleX(0.9856);transform-origin:center;">100.0</div>
<div class="t" style="left:873.90px;top:244.41px;font-size:15.8px;color:#a0a0a0;transform:scaleX(0.9967);transform-origin:left;">Axle Lockers</div>
<div class="b" style="left:0;top:263.58px;width:1157px;height:1px;background:#e3e6e8"></div>
<div class="t" style="left:-60.40px;width:100px;text-align:right;top:270.83px;font-size:15.8px;color:#363636;transform:scaleX(0.9877);transform-origin:right;">292</div>
<div class="t" style="left:50.90px;top:270.83px;font-size:15.8px;color:#363636;transform:scaleX(0.9006);transform-origin:left;">SY</div>
<div class="t" style="left:136.70px;top:270.83px;font-size:15.8px;color:#363636;transform:scaleX(0.9614);transform-origin:left;">C561</div>
<div class="t" style="left:197.40px;top:270.83px;font-size:15.8px;color:#363636;transform:scaleX(0.9478);transform-origin:left;">4166 UTB</div>
<div class="t" style="left:279.00px;top:270.83px;font-size:15.8px;color:#363636;transform:scaleX(0.9834);transform-origin:left;">Ram</div>
<div class="t" style="left:534.00px;top:270.83px;font-size:15.8px;color:#363636;transform:scaleX(1.0579);transform-origin:left;">7/21/2025</div>
<div class="t" style="left:684.80px;top:270.83px;font-size:15.8px;color:#363636;transform:scaleX(0.9777);transform-origin:left;">Yes</div>
<div class="t" style="left:742.50px;top:270.83px;font-size:15.8px;color:#363636;transform:scaleX(0.9553);transform-origin:left;">No</div>
<div class="t" style="left:793.50px;width:74px;text-align:center;top:270.83px;font-size:15.8px;color:#363636;transform:scaleX(0.9856);transform-origin:center;">100.0</div>
<div class="t" style="left:873.90px;top:270.83px;font-size:15.8px;color:#363636;transform:scaleX(1.0018);transform-origin:left;">Axel leak</div>
<div class="b" style="left:0;top:290.00px;width:1157px;height:1px;background:#e3e6e8"></div>
<div class="t" style="left:-60.40px;width:100px;text-align:right;top:297.25px;font-size:15.8px;color:#a0a0a0;transform:scaleX(0.9877);transform-origin:right;">296</div>
<div class="t" style="left:50.90px;top:297.25px;font-size:15.8px;color:#a0a0a0;transform:scaleX(0.9006);transform-origin:left;">SY</div>
<div class="t" style="left:136.70px;top:297.25px;font-size:15.8px;color:#a0a0a0;transform:scaleX(0.9614);transform-origin:left;">C564</div>
<div class="t" style="left:197.40px;top:297.25px;font-size:15.8px;color:#a0a0a0;transform:scaleX(0.9484);transform-origin:left;">3249 STB</div>
<div class="t" style="left:279.00px;top:297.25px;font-size:15.8px;color:#a0a0a0;transform:scaleX(0.9834);transform-origin:left;">Ram</div>
<div class="t" style="left:534.00px;top:297.25px;font-size:15.8px;color:#a0a0a0;transform:scaleX(1.0579);transform-origin:left;">7/24/2025</div>
<div class="t" style="left:684.80px;top:297.25px;font-size:15.8px;color:#a0a0a0;transform:scaleX(0.9777);transform-origin:left;">Yes</div>
<div class="t" style="left:742.50px;top:297.25px;font-size:15.8px;color:#a0a0a0;transform:scaleX(0.9553);transform-origin:left;">No</div>
<div class="t" style="left:793.50px;width:74px;text-align:center;top:297.25px;font-size:15.8px;color:#a0a0a0;transform:scaleX(0.9856);transform-origin:center;">100.0</div>
<div class="t" style="left:873.90px;top:297.25px;font-size:15.8px;color:#a0a0a0;transform:scaleX(1.0018);transform-origin:left;">Axle leak</div>
<div class="b" style="left:0;top:316.42px;width:1157px;height:1px;background:#e3e6e8"></div>
<div class="t" style="left:-60.40px;width:100px;text-align:right;top:323.67px;font-size:15.8px;color:#363636;transform:scaleX(0.9877);transform-origin:right;">297</div>
<div class="t" style="left:50.90px;top:323.67px;font-size:15.8px;color:#363636;transform:scaleX(0.9006);transform-origin:left;">SY</div>
<div class="t" style="left:136.70px;top:323.67px;font-size:15.8px;color:#363636;transform:scaleX(0.9614);transform-origin:left;">C693</div>
<div class="t" style="left:197.40px;top:323.67px;font-size:15.8px;color:#363636;transform:scaleX(0.9478);transform-origin:left;">4026 UTB</div>
<div class="t" style="left:279.00px;top:323.67px;font-size:15.8px;color:#363636;transform:scaleX(0.9834);transform-origin:left;">Ram</div>
<div class="t" style="left:534.00px;top:323.67px;font-size:15.8px;color:#363636;transform:scaleX(1.0579);transform-origin:left;">7/29/2025</div>
<div class="t" style="left:684.80px;top:323.67px;font-size:15.8px;color:#363636;transform:scaleX(0.9777);transform-origin:left;">Yes</div>
<div class="t" style="left:742.50px;top:323.67px;font-size:15.8px;color:#363636;transform:scaleX(0.9553);transform-origin:left;">No</div>
<div class="t" style="left:793.50px;width:74px;text-align:center;top:323.67px;font-size:15.8px;color:#363636;transform:scaleX(0.9856);transform-origin:center;">100.0</div>
<div class="t" style="left:873.90px;top:323.67px;font-size:15.8px;color:#363636;transform:scaleX(1.0099);transform-origin:left;">Engine not start</div>
<div class="b" style="left:0;top:342.84px;width:1157px;height:1px;background:#e3e6e8"></div>
<div class="t" style="left:-60.40px;width:100px;text-align:right;top:350.09px;font-size:15.8px;color:#a0a0a0;transform:scaleX(0.9877);transform-origin:right;">298</div>
<div class="t" style="left:50.90px;top:350.09px;font-size:15.8px;color:#a0a0a0;transform:scaleX(0.9987);transform-origin:left;">Haradh</div>
<div class="t" style="left:136.70px;top:350.09px;font-size:15.8px;color:#a0a0a0;transform:scaleX(0.9614);transform-origin:left;">C675</div>
<div class="t" style="left:197.40px;top:350.09px;font-size:15.8px;color:#a0a0a0;transform:scaleX(0.9484);transform-origin:left;">6304 XTB</div>
<div class="t" style="left:279.00px;top:350.09px;font-size:15.8px;color:#a0a0a0;transform:scaleX(0.9834);transform-origin:left;">Ram</div>
<div class="t" style="left:534.00px;top:350.09px;font-size:15.8px;color:#a0a0a0;transform:scaleX(1.0579);transform-origin:left;">7/30/2025</div>
<div class="t" style="left:684.80px;top:350.09px;font-size:15.8px;color:#a0a0a0;transform:scaleX(0.9553);transform-origin:left;">No</div>
<div class="t" style="left:742.50px;top:350.09px;font-size:15.8px;color:#a0a0a0;transform:scaleX(0.9777);transform-origin:left;">Yes</div>
<div class="t" style="left:793.50px;width:74px;text-align:center;top:350.09px;font-size:15.8px;color:#a0a0a0;transform:scaleX(0.9856);transform-origin:center;">100.0</div>
<div class="t" style="left:873.90px;top:350.09px;font-size:15.8px;color:#a0a0a0;transform:scaleX(1.0082);transform-origin:left;">Accident to hold back Light</div>
</div>
<div class="b" style="left:212.10px;top:752.60px;width:1156.90px;height:1.40px;background:#b9bbbc"></div>
<div class="t" style="left:992.60px;width:100px;text-align:center;top:759.06px;font-size:16px;color:#252423;font-weight:700;">26,386.7</div>
<div class="b" style="left:1370.50px;top:366.70px;width:7.30px;height:177.00px;background:#a9a9a9;border-radius:4px"></div>
<svg width="1413" height="802" viewBox="0 0 1413 802">
<defs>
<mask id="mL"><rect x="0" y="0" width="182" height="200" fill="#fff"/>
<path d="M52.1,82.6 H120 V93.9 H52.1 A5.65,5.65 0 0 1 52.1,82.6 Z" fill="#000"/></mask>
<mask id="mB"><rect x="0" y="0" width="182" height="200" fill="#fff"/>
<path d="M98.1,40 V139.5 A6,6 0 0 0 110.1,139.5 V40 Z" fill="#000"/></mask>
</defs>
<path mask="url(#mL)" d="M94.3,87.6 L56.82,50.12 A58.5,58.5 0 0 0 56.82,125.08 Z" fill="#f1f1f3" stroke="#f1f1f3" stroke-width="2" stroke-linejoin="round"/>
<path mask="url(#mB)" d="M103.3,97.6 L66.53,134.37 A56,56 0 0 0 140.07,134.37 Z" fill="#f1f1f3" stroke="#f1f1f3" stroke-width="2" stroke-linejoin="round"/>
<defs><mask id="gm"><rect x="0" y="200" width="182" height="100" fill="#fff"/><path d="M27.88,263.01 L23.29,258.42 L31.15,250.56 A5.300000000000001,5.300000000000001 0 1 1 35.74,255.15 Z" fill="#000"/></mask></defs>
<path d="M33.40,246.60 L33.40,246.80 L33.40,247.00 L33.42,247.21 L33.46,247.42 L33.57,247.64 L33.81,247.88 L34.25,248.19 L34.80,248.53 L35.22,248.88 L35.42,249.21 L35.48,249.50 L35.46,249.77 L35.40,250.03 L35.31,250.29 L35.22,250.54 L35.11,250.79 L34.98,251.03 L34.84,251.26 L34.66,251.47 L34.42,251.63 L34.05,251.71 L33.50,251.67 L32.87,251.53 L32.34,251.43 L31.99,251.43 L31.76,251.51 L31.59,251.63 L31.43,251.76 L31.29,251.90 L31.14,252.04 L31.00,252.19 L30.86,252.33 L30.73,252.49 L30.61,252.66 L30.53,252.89 L30.53,253.24 L30.63,253.77 L30.77,254.40 L30.81,254.95 L30.73,255.32 L30.57,255.56 L30.36,255.74 L30.13,255.88 L29.89,256.01 L29.64,256.12 L29.39,256.21 L29.13,256.30 L28.87,256.36 L28.60,256.38 L28.31,256.32 L27.98,256.12 L27.63,255.70 L27.29,255.15 L26.98,254.71 L26.74,254.47 L26.52,254.36 L26.31,254.32 L26.10,254.30 L25.90,254.30 L25.70,254.30 L25.50,254.30 L25.30,254.30 L25.09,254.32 L24.88,254.36 L24.66,254.47 L24.42,254.71 L24.11,255.15 L23.77,255.70 L23.42,256.12 L23.09,256.32 L22.80,256.38 L22.53,256.36 L22.27,256.30 L22.01,256.21 L21.76,256.12 L21.51,256.01 L21.27,255.88 L21.04,255.74 L20.83,255.56 L20.67,255.32 L20.59,254.95 L20.63,254.40 L20.77,253.77 L20.87,253.24 L20.87,252.89 L20.79,252.66 L20.67,252.49 L20.54,252.33 L20.40,252.19 L20.26,252.04 L20.11,251.90 L19.97,251.76 L19.81,251.63 L19.64,251.51 L19.41,251.43 L19.06,251.43 L18.53,251.53 L17.90,251.67 L17.35,251.71 L16.98,251.63 L16.74,251.47 L16.56,251.26 L16.42,251.03 L16.29,250.79 L16.18,250.54 L16.09,250.29 L16.00,250.03 L15.94,249.77 L15.92,249.50 L15.98,249.21 L16.18,248.88 L16.60,248.53 L17.15,248.19 L17.59,247.88 L17.83,247.64 L17.94,247.42 L17.98,247.21 L18.00,247.00 L18.00,246.80 L18.00,246.60 L18.00,246.40 L18.00,246.20 L17.98,245.99 L17.94,245.78 L17.83,245.56 L17.59,245.32 L17.15,245.01 L16.60,244.67 L16.18,244.32 L15.98,243.99 L15.92,243.70 L15.94,243.43 L16.00,243.17 L16.09,242.91 L16.18,242.66 L16.29,242.41 L16.42,242.17 L16.56,241.94 L16.74,241.73 L16.98,241.57 L17.35,241.49 L17.90,241.53 L18.53,241.67 L19.06,241.77 L19.41,241.77 L19.64,241.69 L19.81,241.57 L19.97,241.44 L20.11,241.30 L20.26,241.16 L20.40,241.01 L20.54,240.87 L20.67,240.71 L20.79,240.54 L20.87,240.31 L20.87,239.96 L20.77,239.43 L20.63,238.80 L20.59,238.25 L20.67,237.88 L20.83,237.64 L21.04,237.46 L21.27,237.32 L21.51,237.19 L21.76,237.08 L22.01,236.99 L22.27,236.90 L22.53,236.84 L22.80,236.82 L23.09,236.88 L23.42,237.08 L23.77,237.50 L24.11,238.05 L24.42,238.49 L24.66,238.73 L24.88,238.84 L25.09,238.88 L25.30,238.90 L25.50,238.90 L25.70,238.90 L25.90,238.90 L26.10,238.90 L26.31,238.88 L26.52,238.84 L26.74,238.73 L26.98,238.49 L27.29,238.05 L27.63,237.50 L27.98,237.08 L28.31,236.88 L28.60,236.82 L28.87,236.84 L29.13,236.90 L29.39,236.99 L29.64,237.08 L29.89,237.19 L30.13,237.32 L30.36,237.46 L30.57,237.64 L30.73,237.88 L30.81,238.25 L30.77,238.80 L30.63,239.43 L30.53,239.96 L30.53,240.31 L30.61,240.54 L30.73,240.71 L30.86,240.87 L31.00,241.01 L31.14,241.16 L31.29,241.30 L31.43,241.44 L31.59,241.57 L31.76,241.69 L31.99,241.77 L32.34,241.77 L32.87,241.67 L33.50,241.53 L34.05,241.49 L34.42,241.57 L34.66,241.73 L34.84,241.94 L34.98,242.17 L35.11,242.41 L35.22,242.66 L35.31,242.91 L35.40,243.17 L35.46,243.43 L35.48,243.70 L35.42,243.99 L35.22,244.32 L34.80,244.67 L34.25,245.01 L33.81,245.32 L33.57,245.56 L33.46,245.78 L33.42,245.99 L33.40,246.20 L33.40,246.40 Z" stroke="#f4f4f6" fill="none" stroke-linecap="round" stroke-linejoin="round" stroke-width="1.4" mask="url(#gm)"/>
<circle cx="25.7" cy="246.6" r="3.6" stroke="#f4f4f6" fill="none" stroke-linecap="round" stroke-linejoin="round" stroke-width="1.4"/>
<path d="M28.17,260.47 A1.65,1.65 0 0 1 25.83,258.13 L32.90,251.07 A3.7,3.7 0 0 1 36.86,246.22 L36.30,248.38 L37.92,250.00 L40.08,249.44 A3.7,3.7 0 0 1 35.23,253.40 Z" stroke="#f4f4f6" fill="none" stroke-linecap="round" stroke-linejoin="round" stroke-width="1.3"/>
<rect x="15.8" y="303.9" width="3.6" height="5.0" rx="0.9" stroke="#f4f4f6" fill="none" stroke-linecap="round" stroke-linejoin="round" stroke-width="1.3"/>
<rect x="22.2" y="297.6" width="3.6" height="11.3" rx="0.9" stroke="#f4f4f6" fill="none" stroke-linecap="round" stroke-linejoin="round" stroke-width="1.3"/>
<rect x="28.6" y="300.0" width="3.6" height="8.9" rx="0.9" stroke="#f4f4f6" fill="none" stroke-linecap="round" stroke-linejoin="round" stroke-width="1.3"/>
<rect x="35.1" y="292.2" width="3.6" height="16.7" rx="0.9" stroke="#f4f4f6" fill="none" stroke-linecap="round" stroke-linejoin="round" stroke-width="1.3"/>
<path d="M17.4,295.8 L24.4,289.4 L30.4,292.2 L37.2,285.7" stroke="#f4f4f6" fill="none" stroke-linecap="round" stroke-linejoin="round" stroke-width="1.3"/>
<path d="M19.5,335.3 H35 Q40.3,335.3 40.3,340.6 V350.6 Q40.3,355.8 35,355.8 H30.7 L27.3,360.6 L23.8,355.8 H19.5 Q14.3,355.8 14.3,350.6 V340.6 Q14.3,335.3 19.5,335.3 Z" stroke="#f4f4f6" fill="none" stroke-linecap="round" stroke-linejoin="round" stroke-width="1.9"/>
<path d="M23.6,343.2 A3.9,3.9 0 1 1 29.3,346.6 Q27.3,347.7 27.3,349.6" stroke="#f4f4f6" fill="none" stroke-linecap="round" stroke-linejoin="round" stroke-width="2.1"/>
<circle cx="27.1" cy="353.2" r="1.4" fill="#f4f4f6"/>
<path d="M18.6,383.5 H36.6 Q38.7,383.5 38.7,385.6 V400.5" stroke="#f4f4f6" fill="none" stroke-linecap="round" stroke-linejoin="round" stroke-width="1.2"/>
<path d="M18.6,383.5 Q14.2,383.3 14.2,386.2 Q14.2,388.4 18.6,388.4" stroke="#f4f4f6" fill="none" stroke-linecap="round" stroke-linejoin="round" stroke-width="1.2"/>
<path d="M18.6,383.5 V410 L22.2,407.6 L25.5,410.8 L28.9,407.8 L30.2,408.8" stroke="#f4f4f6" fill="none" stroke-linecap="round" stroke-linejoin="round" stroke-width="1.2"/>
<text x="22.4" y="392.2" font-family="Liberation Sans" font-size="7.8" font-weight="700" fill="#f4f4f6" textLength="12.6" lengthAdjust="spacingAndGlyphs">FEE</text>
<path d="M22.4,394.5 H36 M22.4,397.7 H36 M22.4,401 H30.2 M22.4,404.2 H28.4" stroke="#e8e8f4" stroke-width="1.4" fill="none"/>
<circle cx="36" cy="406.4" r="5.4" stroke="#f4f4f6" fill="none" stroke-linecap="round" stroke-linejoin="round" stroke-width="1.2"/>
<text x="33.1" y="409.7" font-family="Liberation Sans" font-size="8.4" font-weight="700" fill="#f4f4f6">B</text>
<circle cx="27.3" cy="446" r="13.1" stroke="#f4f4f6" fill="none" stroke-linecap="round" stroke-linejoin="round" stroke-width="1.5"/>
<circle cx="28.6" cy="440.9" r="1.55" fill="#f4f4f6"/>
<path d="M24.9,444.4 L28.2,444 L26.5,451.3 Q26.6,452.2 28.4,452.4" stroke="#f4f4f6" fill="none" stroke-linecap="round" stroke-linejoin="round" stroke-width="2.4"/>
<g fill="none" stroke="#4a4a4a" stroke-linejoin="round" stroke-linecap="round">
<path d="M1207.9,116.6 L1217.4,106.9 L1228.1,116.8" stroke-width="1.3"/>
<path d="M1211.2,116.6 L1218.5,109.2 M1214.0,116.6 L1220.0,110.6 M1216.8,116.6 L1221.3,112.1" stroke-width="1.0"/>
<path d="M1218.6,116.4 A2.6,2.6 0 0 1 1223.4,114.4" stroke-width="1.0"/>
<path d="M1222.6,116.6 L1225.0,114.6 L1227.0,116.6" stroke-width="0.9"/>
</g>
<path d="M1205.6,116.8 H1234.6 V118.6 A1.5,1.5 0 0 0 1234.6,121.6 A1.5,1.5 0 0 0 1234.6,124.6 A1.5,1.5 0 0 0 1234.6,127.6 A1.5,1.5 0 0 0 1234.6,130.6 A1.5,1.5 0 0 0 1234.6,133.6 V135.3 H1205.6 Z" fill="#f7f8fc" stroke="#4a4a4a" stroke-width="1.3" stroke-linejoin="round"/>
<rect x="1208.4" y="118.0" width="5.5" height="16.2" fill="#7a7a7a"/>
<path d="M1207.9,117 V135 M1214.5,117 V135" stroke="#4a4a4a" stroke-width="1.0"/>
<circle cx="1211.2" cy="120.3" r="0.7" fill="#222"/><circle cx="1211.2" cy="131.6" r="0.7" fill="#222"/>
<g fill="none" stroke="#3a3a3a" stroke-width="1.1" stroke-linejoin="round">
<path d="M1217.6,124.0 Q1218.6,120.3 1223.6,120.3 Q1228.6,120.3 1229.6,124.0"/>
<path d="M1216.8,124.3 H1230.4 V129.0 H1216.8 Z M1217.4,129.0 V131.0 H1219.6 V129.0 M1227.6,129.0 V131.0 H1229.8 V129.0 M1222.2,127.4 H1225"/>
</g>
<circle cx="1219.0" cy="126.6" r="0.8" fill="#3a3a3a"/><circle cx="1228.2" cy="126.6" r="0.8" fill="#3a3a3a"/>
<circle cx="1372" cy="120.8" r="9.9" stroke="#151515" fill="none" stroke-width="1.6"/>
<path d="M1375.4,116.8 Q1374.8,115.2 1372,115.2 Q1368.6,115.2 1368.6,117.9 Q1368.6,120.4 1372,120.7 Q1375.6,121 1375.6,123.6 Q1375.6,126.3 1372,126.3 Q1369.2,126.3 1368.6,124.8 M1372,113.6 V115.2 M1372,126.3 V127.9" stroke="#151515" fill="none" stroke-width="1.9" stroke-linecap="round"/>
<rect x="1206.3" y="201.3" width="27.8" height="15.2" rx="1.8" stroke="#111" fill="none" stroke-width="1.8"/>
<path d="M1210.7,201.3 L1218.3,193.6 M1221.7,193.6 L1229.4,201.3" stroke="#111" stroke-width="1.3" fill="none" stroke-linecap="round"/>
<circle cx="1220" cy="192.6" r="2" stroke="#111" fill="none" stroke-width="1.3"/>
<text x="1220.2" y="212.2" text-anchor="middle" font-family="Liberation Sans" font-weight="700" font-size="8.6" fill="#000" stroke="#000" stroke-width="0.35" textLength="23" lengthAdjust="spacingAndGlyphs">OPEN</text>
<rect x="1206.3" y="283.3" width="27.8" height="15.2" rx="1.8" stroke="#111" fill="none" stroke-width="1.8"/>
<path d="M1210.7,283.3 L1218.3,275.6 M1221.7,275.6 L1229.4,283.3" stroke="#111" stroke-width="1.3" fill="none" stroke-linecap="round"/>
<circle cx="1220" cy="274.6" r="2" stroke="#111" fill="none" stroke-width="1.3"/>
<text x="1220.2" y="294.2" text-anchor="middle" font-family="Liberation Sans" font-weight="700" font-size="8.6" fill="#000" stroke="#000" stroke-width="0.35" textLength="23" lengthAdjust="spacingAndGlyphs">CLOSE</text>
<path d="M1362.3,216 V194.4 Q1362.3,191.7 1365,191.7 H1379.2 Q1381.9,191.7 1381.9,194.4 V216 L1378.5,213.3 L1375.3,216 L1372.1,213.3 L1368.9,216 L1365.6,213.3 Z" stroke="#111" fill="none" stroke-width="1.9" stroke-linejoin="round"/>
<path d="M1374.8,201.4 Q1374.3,199.3 1372.1,199.3 Q1369.5,199.3 1369.5,201.7 Q1369.5,203.8 1372.1,204.1 Q1374.8,204.4 1374.8,206.6 Q1374.8,208.8 1372.1,208.8 Q1369.8,208.8 1369.4,207.2" stroke="#111" fill="none" stroke-width="2.0" stroke-linecap="round"/>
<path d="M1372.1,197.8 V199.3 M1372.1,208.8 V210.2" stroke="#111" stroke-width="1.6"/>
<rect x="1360.9" y="272.6" width="22.6" height="29" rx="2.6" stroke="#333" fill="none" stroke-width="1.3"/>
<rect x="1363.4" y="275" width="17.6" height="24.3" rx="0.8" stroke="#888" fill="none" stroke-width="1.3"/>
<text x="1372.3" y="286" text-anchor="middle" font-family="Liberation Sans" font-size="7.5" font-weight="700" fill="#333" textLength="13" lengthAdjust="spacingAndGlyphs">NO</text>
<text x="1372.3" y="294.6" text-anchor="middle" font-family="Liberation Sans" font-size="7.5" font-weight="700" fill="#444" textLength="13" lengthAdjust="spacingAndGlyphs">FEE</text>
<rect x="785.8" y="21.7" width="9.3" height="9.5" rx="2" stroke="#777" fill="none" stroke-width="1.1"/>
<path d="M786.0999999999999,24.4 H794.9" stroke="#333" stroke-width="1.1"/>
<path d="M787.5,26.4 H788.6999999999999 M787.5,28.3 H788.6999999999999" stroke="#666" stroke-width="0.8"/>
<circle cx="790.5999999999999" cy="26.4" r="0.55" fill="#333"/><circle cx="792.5999999999999" cy="26.4" r="0.55" fill="#333"/><circle cx="790.5999999999999" cy="28.3" r="0.55" fill="#333"/>
<rect x="897.7" y="21.7" width="9.3" height="9.5" rx="2" stroke="#777" fill="none" stroke-width="1.1"/>
<path d="M898.0,24.4 H906.8000000000001" stroke="#333" stroke-width="1.1"/>
<path d="M899.4000000000001,26.4 H900.6 M899.4000000000001,28.3 H900.6" stroke="#666" stroke-width="0.8"/>
<circle cx="902.5" cy="26.4" r="0.55" fill="#333"/><circle cx="904.5" cy="26.4" r="0.55" fill="#333"/><circle cx="902.5" cy="28.3" r="0.55" fill="#333"/>
<path d="M541.3,344 L547.2,349.5 L553,344" stroke="#555" stroke-width="1.1" fill="none"/>
<path d="M217.6,393.6 L222.5,388.9 L227.4,393.6 Z" fill="#1b1a41"/>
</svg>
</body></html>
